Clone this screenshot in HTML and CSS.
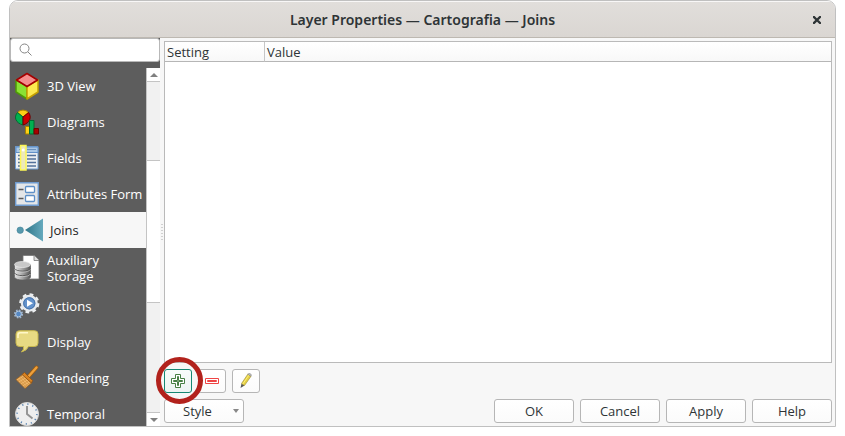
FILE: index.html
```html
<!DOCTYPE html>
<html lang="en">
<head>
<meta charset="utf-8">
<title>Layer Properties — Cartografia — Joins</title>
<link rel="stylesheet" href="styles.css">
</head>
<body>
<main class="window">
  <header class="titlebar">
    <h1>Layer Properties — Cartografia — Joins</h1>
    <button class="close" type="button" aria-label="Close">
      <svg width="8" height="8" viewBox="0 0 8 8"><path d="M1 1L7 7M7 1L1 7" stroke="#2e3436" stroke-width="2.3" stroke-linecap="square"/></svg>
    </button>
  </header>
  <div class="body">
    <aside class="sidebar">
      <label class="search">
        <svg width="14" height="14" viewBox="0 0 14 14" fill="none" stroke="#858585"><circle cx="5.500" cy="5.500" r="4.500"/><path d="M9 9L12.500 12.500"/></svg>
        <input type="search" aria-label="Search">
      </label>
      <div class="list">
        <nav>
          <a href="#view3d">
            <svg class="icon" width="24" height="24" viewBox="0 0 24 24" stroke-width="1.500" stroke-linejoin="round">
              <path d="M1 6L12 12V25L1 18Z" fill="#8ae234" stroke="#4e9a06"/>
              <path d="M23 6L12 12V25L23 18Z" fill="#fce94f" stroke="#c4a000"/>
              <path d="M12 -.5L22.500 6L12 12.500L1.500 6Z" fill="#f58d8d" stroke="#a40000"/>
            </svg>
            <span>3D View</span></a>
          <a href="#diagrams">
            <svg class="icon" width="24" height="24" viewBox="0 0 24 24">
              <path d="M8 7L2.500 2.500A7.500 7.500 0 0 1 13.500 2.500Z" fill="#fcd116" stroke="#b08a00"/>
              <path d="M8 7L2.500 2.500C-1.500 7 .5 13 8 15Z" fill="#00b050" stroke="#006b31"/>
              <path d="M8 7L13.500 2.500C17 7 15 13 8 15Z" fill="#c00" stroke="#6d0000"/>
              <path d="M10.500 16.500h4v7.500h-4z" fill="#fcd116" stroke="#a98100"/>
              <path d="M14.500 10.500h4.500v13.500h-4.500z" fill="#00b050" stroke="#006b31"/>
              <path d="M19 18.500h4.500v5.500h-4.500z" fill="#a80000" stroke="#6d0000"/>
            </svg>
            <span>Diagrams</span></a>
          <a href="#fields">
            <svg class="icon" width="24" height="24" viewBox="0 0 24 24">
              <path d="M.5 .5h22.500v22.500h-22.500z" fill="#eceff2" stroke="#6f9bcf"/>
              <path d="M1 1h22v5.500h-22z" fill="#a9c7e6" stroke="#6190c8"/>
              <path d="M3 9.500h3M3 13h3M3 16.500h3M3 20h3M12 9.500h9M12 13h9M12 16.500h9M12 20h9" stroke="#52719b" stroke-width="1.300"/>
              <path d="M4 3.500h3M12 3.500h9" stroke="#6c91bd"/>
              <path d="M5.500 -.5h5.500v24.500h-5.500z" fill="#ece9bb" stroke="#fcf655" stroke-width="1.500"/>
              <circle cx="8.250" cy="4" r="1.500" fill="#fff"/>
            </svg>
            <span>Fields</span></a>
          <a href="#form">
            <svg class="icon" width="24" height="24" viewBox="0 0 24 24">
              <path d="M.7 .7h22.600v22.600h-22.600z" fill="#e4e6e8" stroke="#6f9bcf" stroke-width="1.400"/>
              <path d="M3.500 7.500h5M3.500 16.500h5" stroke="#595959" stroke-width="1.500"/>
              <rect x="10.500" y="4.500" width="9" height="6" rx="1" fill="#fff" stroke="#5d8fc7" stroke-width="1.300"/>
              <rect x="10.500" y="13.500" width="9" height="6" rx="1" fill="#fff" stroke="#5d8fc7" stroke-width="1.300"/>
            </svg>
            <span>Attributes Form</span></a>
          <a href="#joins" class="current" aria-current="page">
            <svg class="icon" width="27" height="24" viewBox="0 0 27 24">
              <defs><linearGradient id="join"><stop stop-color="#30778a"/><stop offset="1" stop-color="#65a9bd"/></linearGradient></defs>
              <path d="M10 12L28 .5V23.500Z" fill="url(#join)"/><circle cx="5.200" cy="12.200" r="3.200" fill="#5799ad" stroke="#448399" stroke-width=".6"/>
            </svg>
            <span>Joins</span></a>
          <a href="#storage">
            <svg class="icon" width="24" height="24" viewBox="0 0 24 24">
              <defs><linearGradient id="metal"><stop stop-color="#e4e4e4"/><stop offset=".35" stop-color="#bcbcbc"/><stop offset="1" stop-color="#555"/></linearGradient></defs>
              <path d="M8 -.5H19L24 4V23H8Z" fill="#fff" stroke="#777" stroke-width=".8"/><path d="M19 -.5V4.500H24" fill="#ddd" stroke="#777" stroke-width=".8"/>
              <path d="M-.5 8.500V21C0 25 15 25 15.500 21V8.500Z" fill="url(#metal)" stroke="#606060" stroke-width=".7"/>
              <path d="M-.5 12.500C1 16 14 16 15.500 12.500M-.5 17C1 20.500 14 20.500 15.500 17" fill="none" stroke="#555" stroke-width=".9"/>
              <path d="M-.3 13.500C1 17 14 17 15.300 13.500M-.3 18C1 21.500 14 21.500 15.300 18" fill="none" stroke="#d8d8d8" stroke-width=".6"/>
              <ellipse cx="7.500" cy="8.500" rx="8" ry="3" fill="#c8c8c8" stroke="#eee" stroke-width=".7"/>
            </svg>
            <span>Auxiliary Storage</span></a>
          <a href="#actions">
            <svg class="icon" width="24" height="24" viewBox="0 0 24 24">
              <circle cx="14.300" cy="9.300" r="8.600" fill="none" stroke="#edf0f2" stroke-width="3" stroke-dasharray="3.600 3.154"/>
              <circle cx="14.300" cy="9.300" r="7.300" fill="#6292cc" stroke="#e7eaed" stroke-width="2.400"/>
              <circle cx="14.300" cy="9.300" r="5.600" fill="#6292cc" stroke="#4773aa"/>
              <path d="M12 5.800L18 9.300L12 12.800Z" fill="#fff"/>
              <circle cx="3.500" cy="20" r="3.700" fill="none" stroke="#9bb4d1" stroke-width="1.800" stroke-dasharray="1.600 1.305"/>
              <circle cx="3.500" cy="20" r="2.900" fill="#5588c4" stroke="#b6c8db"/>
            </svg>
            <span>Actions</span></a>
          <a href="#display">
            <svg class="icon" width="24" height="24" viewBox="0 0 24 24">
              <path d="M4.500 .7H19.500Q23 .7 23 4V13Q23 16.500 19.500 16.500H13.500Q12 20.500 6.500 22Q9.500 19 8.500 16.500H4.500Q1 16.500 1 13V4Q1 .7 4.500 .7Z" fill="#e8da83" stroke="#c8b84e"/>
              <path d="M3 8V5Q3 2.700 5 2.700H13" fill="none" stroke="#fff8c8" stroke-width="1.500"/>
            </svg>
            <span>Display</span></a>
          <a href="#rendering">
            <svg class="icon" width="24" height="24" viewBox="0 0 24 24">
              <path d="M13.500 10.500L21.500 1.500" stroke="#9b5b12" stroke-width="4" stroke-linecap="round"/><path d="M13.500 10.500L21.500 1.500" stroke="#eea03b" stroke-width="2.400" stroke-linecap="round"/>
              <path d="M7.500 8.500L16.500 17L10 22.500L1 13.500Z" fill="#edb468" stroke="#9d5f1b" stroke-width=".8"/>
              <path d="M6 10L14.500 18.500M4.500 11L12.500 20M3 12.500L11 21M2.800 15L10 10.500M5 17L12 12.500M7 19L14 14.500M9 21L15.500 16.500" stroke="#c98733" stroke-width=".5"/>
              <path d="M7 8.500L9.500 6.500L17.500 14.500L16.500 17Z" fill="#d98322" stroke="#94520f" stroke-width=".8"/>
            </svg>
            <span>Rendering</span></a>
          <a href="#temporal">
            <svg class="icon" width="24" height="24" viewBox="0 0 24 24">
              <circle cx="12" cy="12" r="11.500" fill="#eee" stroke="#d7d7d7"/>
              <circle cx="12" cy="12" r="9.900" fill="none" stroke="#5480b0" stroke-width="1.500" stroke-dasharray="1.200 3.984"/>
              <path d="M12 4V12L17.500 16.500" fill="none" stroke="#929292" stroke-width="1.900"/>
            </svg>
            <span>Temporal</span></a>
        </nav>
        <div class="scrollbar">
          <button type="button" aria-label="Scroll up"><svg width="8" height="4" viewBox="0 0 8 4"><path d="M0 4L4 0L8 4Z" fill="#808080"/></svg></button>
          <div class="track"><div class="thumb"></div></div>
          <button type="button" aria-label="Scroll down"><svg width="8" height="4" viewBox="0 0 8 4"><path d="M0 0L4 4L8 0Z" fill="#808080"/></svg></button>
        </div>
      </div>
    </aside>
    <div class="splitter"><svg width="2" height="17" viewBox="0 0 2 17"><path d="M1 0V17" stroke="#aaa" stroke-dasharray="1 2"/></svg></div>
    <section class="content">
      <div class="joins">
        <table>
          <thead><tr><th class="setting" scope="col">Setting</th><th scope="col">Value</th></tr></thead>
        </table>
      </div>
      <div class="tools">
        <div class="marked">
          <button class="tool add" type="button" aria-label="Add join"><svg width="14" height="14" viewBox="0 0 14 14" fill="none" stroke="#477f44"><path d="M4.500 .5h5v4h4v5h-4v4h-5v-4h-4v-5h4z" fill="#fff"/><path d="M6.500 2.500h1v4h4v1h-4v4h-1v-4h-4v-1h4z"/></svg></button>
          <svg class="ring" width="47" height="47" viewBox="0 0 47 47"><circle cx="23.500" cy="23.500" r="21" fill="none" stroke="#b2221c" stroke-width="5"/></svg>
        </div>
        <button class="tool" type="button" aria-label="Remove join"><svg width="14" height="6" viewBox="0 0 14 6" fill="#fff" stroke="#ef4444"><path d="M.5 .5h13v5h-13z"/><path d="M2.500 2.500h9v1h-9z"/></svg></button>
        <button class="tool" type="button" aria-label="Edit join"><svg width="14" height="16" viewBox="0 0 14 16"><path d="M1.500 15L2.500 10.500L5.500 12.500Z" fill="#555"/><path d="M2.500 10.500L8.800 1.200L12 3.300L5.500 12.500Z" fill="#e4cf43" stroke="#9a8b36" stroke-width=".6"/><path d="M3.800 11L10 2" stroke="#fff079"/><path d="M8.800 1.200Q10 -.2 11.500 .8T12 3.300Z" fill="#c5c5c5" stroke="#777" stroke-width=".5"/></svg></button>
      </div>
      <footer>
        <button class="style" type="button"><span>Style</span><svg width="6" height="4" viewBox="0 0 6 4"><path d="M0 0L3 4L6 0Z" fill="#888"/></svg></button>
        <button type="button">OK</button>
        <button type="button">Cancel</button>
        <button type="button">Apply</button>
        <button type="button">Help</button>
      </footer>
    </section>
  </div>
</main>
</body>
</html>
```

FILE: styles.css
```css
* { box-sizing: border-box; }

body {
  margin: 0;
  padding: 0 9px 9px;
  height: 100vh;
  background: #fff;
  color: #2e3436;
  font: 13px/16px "Open Sans", "Noto Sans", sans-serif;
}

svg { display: block; flex: none; }

button {
  display: flex;
  align-items: center;
  justify-content: center;
  height: 24px;
  padding: 0;
  border: 1px solid #b6b6b6;
  border-radius: 3px;
  background: linear-gradient(#fff, #fbfbfb);
  color: inherit;
  font: inherit;
}

.window {
  display: flex;
  flex-direction: column;
  height: 100%;
  border: 1px solid #c0c0c0;
  border-radius: 9px 9px 0 0;
  background: #f7f7f7;
  overflow: hidden;
}

.titlebar {
  display: grid;
  grid-template-columns: 24px 1fr 24px;
  align-items: center;
  height: 37px;
  padding: 0 6px;
  border-top: 1px solid #f8f7f7;
  border-bottom: 1px solid #bdb8b1;
  background: linear-gradient(#e1dedb, #dad6d2);
}

.titlebar h1 {
  grid-column: 2;
  margin: 0;
  font-family: "Noto Sans", sans-serif;
  font-size: 14px;
  font-weight: 600;
  line-height: 20px;
  text-align: center;
}

.close { border: 0; background: none; }

.body { display: flex; flex: 1; min-height: 0; }

.sidebar {
  display: flex;
  flex-direction: column;
  width: 150px;
  background: #5d5d5d;
}

.search {
  display: flex;
  align-items: center;
  gap: 4px;
  height: 24px;
  margin-bottom: 6px;
  padding: 0 4px 0 8px;
  border: 1px solid #b8b8b8;
  border-radius: 3px;
  background: #fff;
}

.search input {
  flex: 1;
  min-width: 0;
  padding: 0;
  border: 0;
  outline: 0;
  background: none;
  font: inherit;
}

.list { display: flex; flex: 1; min-height: 0; }

nav { flex: 1; min-height: 0; overflow: hidden; }

nav a {
  display: flex;
  align-items: center;
  gap: 8px;
  min-height: 36px;
  padding: 4px 5px;
  color: #fff;
  text-decoration: none;
}

nav a span { flex: 1; white-space: nowrap; }
nav a[href="#storage"] { min-height: 40px; }
nav a[href="#storage"] span { white-space: normal; }
nav .current { background: #f7f7f7; color: #1d1d1d; }
.icon { overflow: visible; }

.scrollbar {
  display: flex;
  flex-direction: column;
  width: 14px;
  border-left: 1px solid #c4c4c4;
  background: #f1f1f1;
}

.scrollbar button {
  height: 14px;
  border: 0;
  border-bottom: 1px solid #c4c4c4;
  border-radius: 0;
  background: #fff;
}

.scrollbar button:last-child { border-top: 1px solid #c4c4c4; border-bottom: 0; }

.track {
  display: grid;
  grid-template-rows: 78fr 143fr 109fr;
  flex: 1;
}

.thumb {
  grid-row: 2;
  border: 1px solid #c4c4c4;
  border-width: 1px 0;
  background: #fff;
}

.splitter { display: flex; align-items: center; width: 4px; justify-content: center; }

.content {
  display: flex;
  flex: 1;
  flex-direction: column;
  gap: 6px;
  min-width: 0;
  padding: 3px 3px 3px 0;
}

.joins { flex: 1; border: 1px solid #bababa; background: #fff; }

table { width: 100%; border-collapse: separate; border-spacing: 0; table-layout: fixed; }

th {
  height: 20px;
  padding: 0 2px;
  border-bottom: 1px solid #b6b6b6;
  background: linear-gradient(#fff, #f8f8f8);
  font-weight: 400;
  text-align: left;
}

.setting { width: 100px; border-right: 1px solid #c6c6c6; }

.tools { display: flex; gap: 6px; }
.tool { width: 28px; }
.add { border-color: #168773; background: linear-gradient(#f8fbfa, #edf4f2); }
.marked { position: relative; }
.ring { position: absolute; top: -12px; left: -8px; pointer-events: none; }

footer { display: flex; gap: 6px; }
footer button { width: 80px; }
footer .style { margin-right: auto; padding: 0 4px 0 18px; justify-content: space-between; }
```
